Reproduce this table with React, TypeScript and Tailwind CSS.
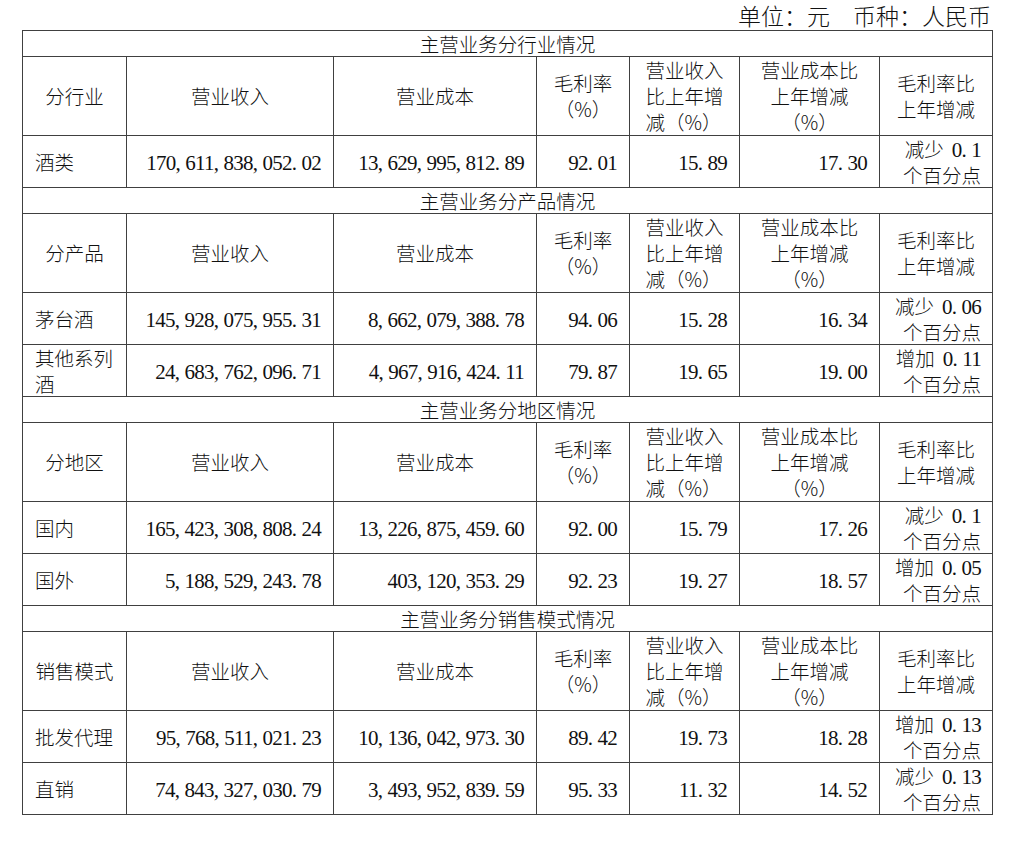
import { Fragment } from "react"

interface Row {
  name: string
  revenue: string
  cost: string
  margin: string
  revenueChange: string
  costChange: string
  marginChange: [string, string]
}

interface Section {
  title: string
  label: string
  rows: Row[]
}

const sections: Section[] = [
  {
    title: "主营业务分行业情况",
    label: "分行业",
    rows: [
      {
        name: "酒类",
        revenue: "170,611,838,052.02",
        cost: "13,629,995,812.89",
        margin: "92.01",
        revenueChange: "15.89",
        costChange: "17.30",
        marginChange: ["减少", "0.1"],
      },
    ],
  },
  {
    title: "主营业务分产品情况",
    label: "分产品",
    rows: [
      {
        name: "茅台酒",
        revenue: "145,928,075,955.31",
        cost: "8,662,079,388.78",
        margin: "94.06",
        revenueChange: "15.28",
        costChange: "16.34",
        marginChange: ["减少", "0.06"],
      },
      {
        name: "其他系列酒",
        revenue: "24,683,762,096.71",
        cost: "4,967,916,424.11",
        margin: "79.87",
        revenueChange: "19.65",
        costChange: "19.00",
        marginChange: ["增加", "0.11"],
      },
    ],
  },
  {
    title: "主营业务分地区情况",
    label: "分地区",
    rows: [
      {
        name: "国内",
        revenue: "165,423,308,808.24",
        cost: "13,226,875,459.60",
        margin: "92.00",
        revenueChange: "15.79",
        costChange: "17.26",
        marginChange: ["减少", "0.1"],
      },
      {
        name: "国外",
        revenue: "5,188,529,243.78",
        cost: "403,120,353.29",
        margin: "92.23",
        revenueChange: "19.27",
        costChange: "18.57",
        marginChange: ["增加", "0.05"],
      },
    ],
  },
  {
    title: "主营业务分销售模式情况",
    label: "销售模式",
    rows: [
      {
        name: "批发代理",
        revenue: "95,768,511,021.23",
        cost: "10,136,042,973.30",
        margin: "89.42",
        revenueChange: "19.73",
        costChange: "18.28",
        marginChange: ["增加", "0.13"],
      },
      {
        name: "直销",
        revenue: "74,843,327,030.79",
        cost: "3,493,952,839.59",
        margin: "95.33",
        revenueChange: "11.32",
        costChange: "14.52",
        marginChange: ["减少", "0.13"],
      },
    ],
  },
]

// digits in a serif face, separators padded out to a half-width cell like SimSun
function Num({ value }: { value: string }) {
  return (
    <span className="font-['Liberation_Serif',serif] text-[21px] leading-none tracking-[-0.75px]">
      {Array.from(value).map((ch, i) =>
        ch === "," || ch === "." ? (
          <span key={i} className="inline-block w-[9.75px] text-left">
            {ch}
          </span>
        ) : (
          <Fragment key={i}>{ch}</Fragment>
        )
      )}
    </span>
  )
}

const cell = "border border-[#404040] p-0 align-middle"

export default function App() {
  return (
    <div className="w-[1024px] h-[845px] bg-white text-[#111] font-['Noto_Sans_CJK_SC','Noto_Sans_CJK_JP',sans-serif] font-light">
      <div className="ml-[22px] w-[970px] h-[30px] leading-[30px] text-right text-[23px] pr-px">
        单位：元　币种：人民币
      </div>

      <table className="ml-[22px] w-[970px] table-fixed border-collapse text-[19.5px]">
        <colgroup>
          <col className="w-[104px]" />
          <col className="w-[207px]" />
          <col className="w-[203px]" />
          <col className="w-[93px]" />
          <col className="w-[110px]" />
          <col className="w-[140px]" />
          <col className="w-[113px]" />
        </colgroup>
        <tbody>
          {sections.map((section) => (
            <Fragment key={section.title}>
              <tr>
                <td colSpan={7} className={`${cell} text-center leading-[25px]`}>
                  {section.title}
                </td>
              </tr>

              <tr className="text-center leading-[26px]">
                <td className={`${cell} h-[77px]`}>{section.label}</td>
                <td className={cell}>营业收入</td>
                <td className={cell}>营业成本</td>
                <td className={cell}>
                  毛利率
                  <br />
                  （%）
                </td>
                <td className={cell}>
                  <span className="inline-block text-left">
                    营业收入
                    <br />
                    比上年增
                    <br />
                    减（%）
                  </span>
                </td>
                <td className={cell}>
                  营业成本比
                  <br />
                  上年增减
                  <br />
                  （%）
                </td>
                <td className={cell}>
                  毛利率比
                  <br />
                  上年增减
                </td>
              </tr>

              {section.rows.map((row) => (
                <tr key={row.name} className="leading-[25.5px]">
                  <td className={`${cell} h-[51px] pl-3 pr-2 text-left`}>{row.name}</td>
                  <td className={`${cell} pr-3 text-right`}>
                    <Num value={row.revenue} />
                  </td>
                  <td className={`${cell} pr-3 text-right`}>
                    <Num value={row.cost} />
                  </td>
                  <td className={`${cell} pr-3 text-right`}>
                    <Num value={row.margin} />
                  </td>
                  <td className={`${cell} pr-3 text-right`}>
                    <Num value={row.revenueChange} />
                  </td>
                  <td className={`${cell} pr-3 text-right`}>
                    <Num value={row.costChange} />
                  </td>
                  <td className={`${cell} pr-[11px] text-right`}>
                    <div>
                      {row.marginChange[0]}
                      <span className="inline-block w-[8px]" />
                      <Num value={row.marginChange[1]} />
                    </div>
                    <div>个百分点</div>
                  </td>
                </tr>
              ))}
            </Fragment>
          ))}
        </tbody>
      </table>
    </div>
  )
}
